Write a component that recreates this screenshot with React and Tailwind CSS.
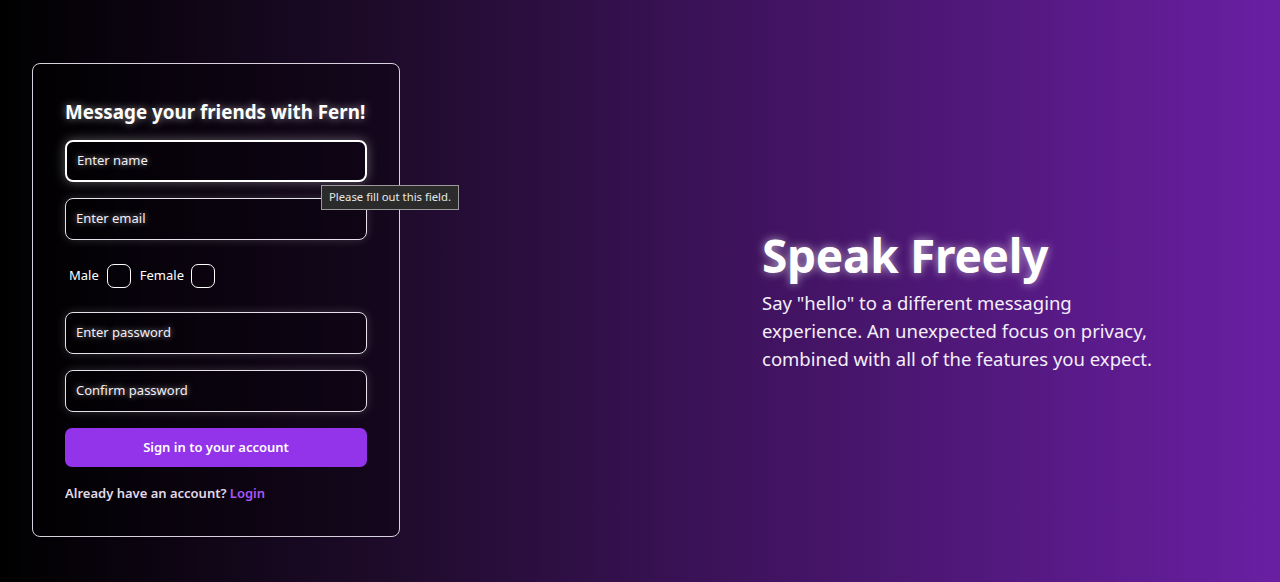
import React from "react";

const font = { fontFamily: '"Noto Sans", "Open Sans", sans-serif' };

function Field({ placeholder, focused }) {
  return (
    <div
      className={
        "h-[42px] w-[302px] rounded-[8px] flex items-center px-[10px] text-[13px] text-[#f3eef6] bg-black/20 " +
        (focused
          ? "border-2 border-white shadow-[0_0_12px_rgba(255,255,255,0.35)]"
          : "border border-[#e6e0ea] shadow-[0_0_10px_rgba(255,255,255,0.18)]")
      }
    >
      <span className="[text-shadow:0_0_6px_rgba(255,255,255,0.6)]">{placeholder}</span>
    </div>
  );
}

export default function App() {
  return (
    <div
      style={font}
      className="w-[1280px] h-[582px] overflow-hidden flex bg-[linear-gradient(90deg,#000000_0%,#1e0b2a_30%,#3b1258_55%,#6a1fa3_100%)] text-white"
    >
      <div className="w-[640px] pl-[32px] pt-[63px]">
        <div className="relative w-[368px] h-[474px] rounded-[8px] border border-[#d9d2de] bg-black/30 px-[32px] pt-[36px]">
          <h1 className="text-[18.8px] leading-[24px] font-bold text-white [text-shadow:0_0_8px_rgba(255,255,255,0.55)] whitespace-nowrap">
            Message your friends with Fern!
          </h1>
          <div className="mt-[16px]">
            <Field placeholder="Enter name" focused />
          </div>
          <div className="mt-[16px]">
            <Field placeholder="Enter email" />
          </div>
          <div className="mt-[24px] flex items-center h-[24px] pl-[4px] text-[13px]">
            <span>Male</span>
            <span className="ml-[8px] w-[24px] h-[24px] rounded-[7px] border border-white" />
            <span className="ml-[9px]">Female</span>
            <span className="ml-[7px] w-[24px] h-[24px] rounded-[7px] border border-white" />
          </div>
          <div className="mt-[24px]">
            <Field placeholder="Enter password" />
          </div>
          <div className="mt-[16px]">
            <Field placeholder="Confirm password" />
          </div>
          <button className="mt-[16px] w-[302px] h-[39px] rounded-[7px] bg-[#9333ea] text-[13px] font-semibold text-white">
            Sign in to your account
          </button>
          <p className="mt-[17px] text-[13px] font-semibold text-[#e2dae8]">
            Already have an account? <span className="text-[#a855f7]">Login</span>
          </p>

          <div className="absolute left-[288px] top-[121px] h-[25px] px-[7px] flex items-center bg-[#2b2b2b] border border-[#9a9a9a] text-[11.3px] text-[#e8e8e8] whitespace-nowrap">
            Please fill out this field.
          </div>
        </div>
      </div>
      <div className="flex-1 flex flex-col justify-center pl-[122px] pt-[22px]">
        <h2 className="text-[46px] leading-[48px] font-bold [text-shadow:0_0_10px_rgba(255,255,255,0.6)] tracking-[-0.3px]">
          Speak Freely
        </h2>
        <p className="mt-[10px] w-[405px] text-[18.5px] leading-[28px] text-[#f4eefa]">
          Say "hello" to a different messaging experience. An unexpected focus on privacy, combined with all of the features you expect.
        </p>
      </div>
    </div>
  );
}
